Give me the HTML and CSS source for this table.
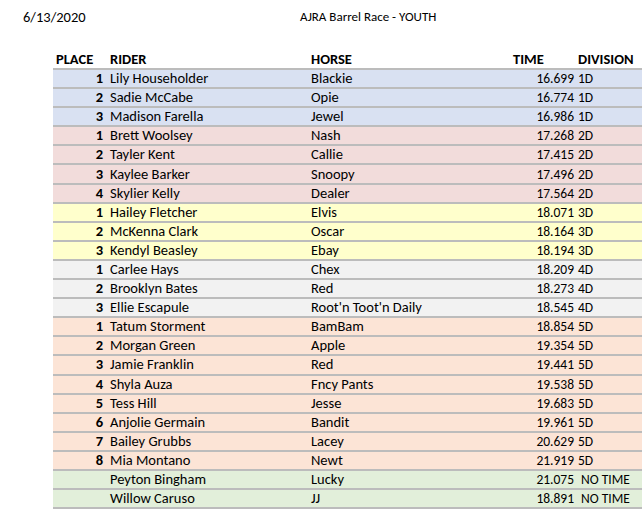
FILE: index.html
```html
<!DOCTYPE html>
<html>
<head>
<meta charset="utf-8">
<link rel="stylesheet" href="styles.css">
</head>
<body>
<div class="page">
  <div class="titlebar">
    <span class="date">6/13/2020</span>
    <span class="title">AJRA Barrel Race - YOUTH</span>
  </div>
  <div class="table">
    <div class="row head">
      <div class="c place">PLACE</div>
      <div class="c rider">RIDER</div>
      <div class="c horse">HORSE</div>
      <div class="c time">TIME</div>
      <div class="c div">DIVISION</div>
    </div>
    <div class="row d1"><div class="c place">1</div><div class="c rider">Lily Householder</div><div class="c horse">Blackie</div><div class="c time">16.699</div><div class="c div">1D</div></div>
    <div class="row d1"><div class="c place">2</div><div class="c rider">Sadie McCabe</div><div class="c horse">Opie</div><div class="c time">16.774</div><div class="c div">1D</div></div>
    <div class="row d1"><div class="c place">3</div><div class="c rider">Madison Farella</div><div class="c horse">Jewel</div><div class="c time">16.986</div><div class="c div">1D</div></div>
    <div class="row d2"><div class="c place">1</div><div class="c rider">Brett Woolsey</div><div class="c horse">Nash</div><div class="c time">17.268</div><div class="c div">2D</div></div>
    <div class="row d2"><div class="c place">2</div><div class="c rider">Tayler Kent</div><div class="c horse">Callie</div><div class="c time">17.415</div><div class="c div">2D</div></div>
    <div class="row d2"><div class="c place">3</div><div class="c rider">Kaylee Barker</div><div class="c horse">Snoopy</div><div class="c time">17.496</div><div class="c div">2D</div></div>
    <div class="row d2"><div class="c place">4</div><div class="c rider">Skylier Kelly</div><div class="c horse">Dealer</div><div class="c time">17.564</div><div class="c div">2D</div></div>
    <div class="row d3"><div class="c place">1</div><div class="c rider">Hailey Fletcher</div><div class="c horse">Elvis</div><div class="c time">18.071</div><div class="c div">3D</div></div>
    <div class="row d3"><div class="c place">2</div><div class="c rider">McKenna Clark</div><div class="c horse">Oscar</div><div class="c time">18.164</div><div class="c div">3D</div></div>
    <div class="row d3"><div class="c place">3</div><div class="c rider">Kendyl Beasley</div><div class="c horse">Ebay</div><div class="c time">18.194</div><div class="c div">3D</div></div>
    <div class="row d4"><div class="c place">1</div><div class="c rider">Carlee Hays</div><div class="c horse">Chex</div><div class="c time">18.209</div><div class="c div">4D</div></div>
    <div class="row d4"><div class="c place">2</div><div class="c rider">Brooklyn Bates</div><div class="c horse">Red</div><div class="c time">18.273</div><div class="c div">4D</div></div>
    <div class="row d4"><div class="c place">3</div><div class="c rider">Ellie Escapule</div><div class="c horse">Root'n Toot'n Daily</div><div class="c time">18.545</div><div class="c div">4D</div></div>
    <div class="row d5"><div class="c place">1</div><div class="c rider">Tatum Storment</div><div class="c horse">BamBam</div><div class="c time">18.854</div><div class="c div">5D</div></div>
    <div class="row d5"><div class="c place">2</div><div class="c rider">Morgan Green</div><div class="c horse">Apple</div><div class="c time">19.354</div><div class="c div">5D</div></div>
    <div class="row d5"><div class="c place">3</div><div class="c rider">Jamie Franklin</div><div class="c horse">Red</div><div class="c time">19.441</div><div class="c div">5D</div></div>
    <div class="row d5"><div class="c place">4</div><div class="c rider">Shyla Auza</div><div class="c horse">Fncy Pants</div><div class="c time">19.538</div><div class="c div">5D</div></div>
    <div class="row d5"><div class="c place">5</div><div class="c rider">Tess Hill</div><div class="c horse">Jesse</div><div class="c time">19.683</div><div class="c div">5D</div></div>
    <div class="row d5"><div class="c place">6</div><div class="c rider">Anjolie Germain</div><div class="c horse">Bandit</div><div class="c time">19.961</div><div class="c div">5D</div></div>
    <div class="row d5"><div class="c place">7</div><div class="c rider">Bailey Grubbs</div><div class="c horse">Lacey</div><div class="c time">20.629</div><div class="c div">5D</div></div>
    <div class="row d5"><div class="c place">8</div><div class="c rider">Mia Montano</div><div class="c horse">Newt</div><div class="c time">21.919</div><div class="c div">5D</div></div>
    <div class="row nt"><div class="c place"></div><div class="c rider">Peyton Bingham</div><div class="c horse">Lucky</div><div class="c time">21.075</div><div class="c div">NO TIME</div></div>
    <div class="row nt last"><div class="c place"></div><div class="c rider">Willow Caruso</div><div class="c horse">JJ</div><div class="c time">18.891</div><div class="c div">NO TIME</div></div>
  </div>
</div>
</body>
</html>
```
FILE: styles.css
```css
html, body {
  margin: 0;
  padding: 0;
  background: #ffffff;
}
body {
  font-family: Carlito, Lato, "Liberation Sans", sans-serif;
  font-size: 14.5px;
  color: #000;
  width: 642px;
  height: 512px;
  overflow: hidden;
}
.page {
  display: flex;
  flex-direction: column;
}
.titlebar {
  display: flex;
  height: 50px;
  padding-top: 8px;
  box-sizing: border-box;
  line-height: 18px;
  font-size: 13px;
}
.date {
  margin-left: 23px;
  width: 277px;
  font-size: 14.5px;
}
.table {
  display: flex;
  flex-direction: column;
  margin-left: 53px;
}
.row {
  display: grid;
  grid-template-columns: 53px 201px 202px 67px 1fr;
  height: 19.1px;
  box-sizing: border-box;
  border-top: 2px solid #bcbcbc;
  align-items: center;
  line-height: 17px;
  white-space: nowrap;
}
.row.head {
  border-top: none;
  height: 18px;
  font-weight: bold;
}
.row.last {
  border-bottom: 2px solid #bcbcbc;
  height: 21.1px;
}
.place {
  text-align: right;
  padding-right: 3px;
  font-weight: bold;
}
.head .place { text-align: left; padding-left: 3px; }
.rider, .horse { padding-left: 4px; }
.time {
  text-align: right;
  padding-right: 2px;
  font-size: 13.5px;
}
.head .time { text-align: left; padding-left: 4px; font-size: 14.5px; }
.div { padding-left: 2px; font-size: 13.5px; }
.head .div { font-size: 14.5px; }
.nt .div { padding-left: 5px; }
.d1 { background: #d9e1f2; }
.d2 { background: #f2dcdb; }
.d3 { background: #ffffcc; }
.d4 { background: #f2f2f2; }
.d5 { background: #fce4d6; }
.nt { background: #e2efda; }
```
